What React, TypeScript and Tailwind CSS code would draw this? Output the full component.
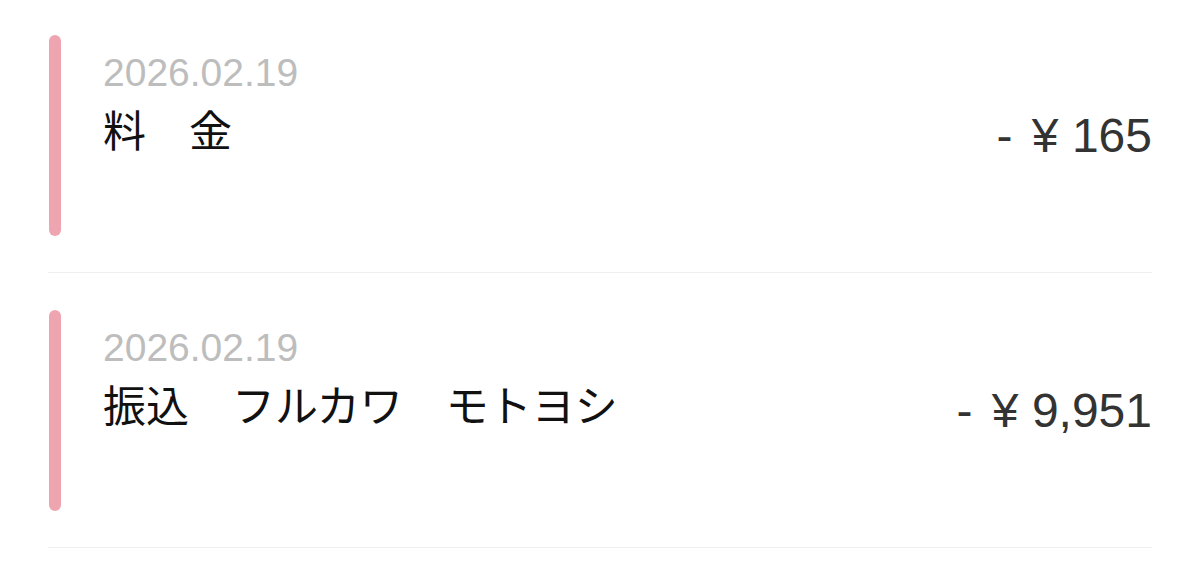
import React from 'react'

interface Txn {
  date: string
  title: string
  amount: string
}

const txns: Txn[] = [
  { date: '2026.02.19', title: '料　金', amount: '165' },
  { date: '2026.02.19', title: '振込　フルカワ　モトヨシ', amount: '9,951' },
]

function TxnRow({ txn }: { txn: Txn }) {
  return (
    <div className="flex items-start pt-[37px] pb-[36px] border-b border-[#efefef]">
      {/* accent bar */}
      <div className="w-[12px] h-[201px] ml-[1px] rounded-full bg-[#efa5b0] shrink-0" />

      <div className="flex-1 ml-[42px] min-w-0">
        <div className="mt-[18px] text-[39px] leading-none text-[#bdbdbd] font-['Liberation_Sans',sans-serif]">
          {txn.date}
        </div>
        <div className="mt-[15px] text-[43px] leading-none text-[#111] font-['Noto_Sans_CJK_JP',sans-serif] whitespace-nowrap">
          {txn.title}
        </div>
      </div>

      <div className="mt-[77px] text-[48px] leading-none text-[#333] font-['Liberation_Sans',sans-serif] whitespace-nowrap">
        <span className="mr-[6px]">-</span>&nbsp;¥&nbsp;{txn.amount}
      </div>
    </div>
  )
}

export default function App() {
  return (
    <div className="w-[1200px] h-[565px] bg-white overflow-hidden">
      <div className="mx-[48px] -mt-[2px]">
        {txns.map((t, i) => (
          <TxnRow key={i} txn={t} />
        ))}
      </div>
    </div>
  )
}
